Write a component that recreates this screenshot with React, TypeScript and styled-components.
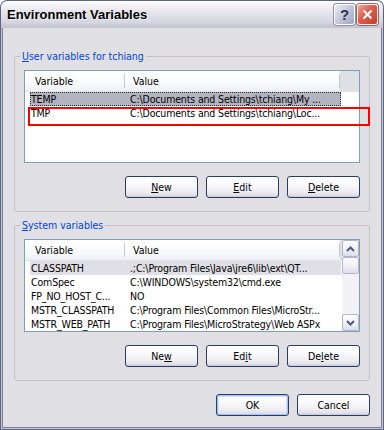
import React from "react";
import styled, { createGlobalStyle, css } from "styled-components";

const GlobalStyle = createGlobalStyle`
  html, body { margin: 0; padding: 0; background: #ffffff; }
  body { width: 384px; height: 430px; overflow: hidden; }
  * { box-sizing: border-box; }
`;

const uiFont = css`
  font-family: "DejaVu Sans Condensed", "DejaVu Sans", sans-serif;
  font-stretch: condensed;
  font-size: 10.5px;
`;

const Window = styled.div`
  width: 384px;
  height: 430px;
  display: flex;
  flex-direction: column;
`;

const TitleBar = styled.div`
  height: 28px;
  flex: none;
  display: flex;
  align-items: center;
  padding: 0 5px 1px 6px;
  border: 1px solid #5d6484;
  border-bottom: none;
  border-radius: 7px 7px 0 0;
  background: linear-gradient(
    180deg,
    #ffffff 0%,
    #f2f2f6 15%,
    #e3e3ea 45%,
    #d5d5df 80%,
    #c1c1ce 100%
  );
`;

const Title = styled.div`
  flex: 1;
  font-family: "Liberation Sans", Arial, sans-serif;
  font-weight: bold;
  font-size: 13px;
  color: #000000;
  text-shadow: 1px 1px 0 rgba(255, 255, 255, 0.6);
`;

const CapButton = styled.div<{ $kind: "help" | "close" }>`
  width: 21px;
  height: 21px;
  margin-left: 2px;
  border: 1px solid #ffffff;
  border-radius: 3px;
  display: flex;
  align-items: center;
  justify-content: center;
  font-family: "Liberation Sans", Arial, sans-serif;
  font-weight: bold;
  font-size: 15px;
  ${(p) =>
    p.$kind === "close"
      ? css`
          background: linear-gradient(135deg, #f3a597 0%, #e2604d 40%, #c63a2b 100%);
          box-shadow: 0 0 0 1px #b35a5a;
        `
      : css`
          background: linear-gradient(135deg, #eceef6 0%, #c4c7da 50%, #a0a4bf 100%);
          box-shadow: 0 0 0 1px #8a8ea8;
          color: #2e3450;
        `}
`;

const Frame = styled.div`
  flex: 1;
  display: flex;
  flex-direction: column;
  border: 1px solid #5d6484;
  border-top: none;
  padding: 0 1px 1px 1px;
  background: #c6c6d3;
`;

const Body = styled.div`
  flex: 1;
  position: relative;
  display: flex;
  flex-direction: column;
  border: 1px solid #7c819e;
  border-top: none;
  background: #e0dfe3;
  padding: 22px 11px 0 11px;
`;

const Group = styled.fieldset`
  margin: 0;
  padding: 7px 9px 13px 9px;
  border: 1px solid #c5bec7;
  border-radius: 3px;
  display: flex;
  flex-direction: column;
  min-width: 0;
  & + & {
    margin-top: 7px;
  }
`;

const Legend = styled.legend`
  ${uiFont};
  color: #0046d5;
  line-height: 13px;
  padding: 0 2px;
  margin-left: -4px;
`;

const Key = styled.span`
  text-decoration: underline;
`;

const List = styled.div`
  height: 93px;
  border: 1px solid #7f9db9;
  background: #ffffff;
  display: flex;
  overflow: hidden;
`;

const ListMain = styled.div`
  flex: 1;
  min-width: 0;
  display: flex;
  flex-direction: column;
`;

const Header = styled.div`
  height: 21px;
  flex: none;
  display: flex;
  align-items: center;
  background: linear-gradient(180deg, #ffffff 0%, #f7f8fb 70%, #eceef3 100%);
  border-bottom: 1px solid #e3e3ea;
  ${uiFont};
  color: #000000;
`;

const HeadCell = styled.div<{ $w: number; $pad: number }>`
  width: ${(p) => p.$w}px;
  padding-left: ${(p) => p.$pad}px;
  flex: none;
  white-space: nowrap;
`;

const HeadDivider = styled.div`
  width: 1px;
  height: 14px;
  flex: none;
  background: #c8c7d2;
`;

const HeadFiller = styled.div`
  flex: 1;
  align-self: stretch;
  background: #dde0e5;
`;

const Rows = styled.div`
  flex: 1;
  padding-left: 5px;
`;

const Row = styled.div<{ $sel?: "focus" | "inactive" }>`
  width: 311px;
  height: 14px;
  display: flex;
  padding-left: 1px;
  line-height: 14px;
  ${uiFont};
  letter-spacing: -0.15px;
  color: #000000;
  white-space: nowrap;
  ${(p) =>
    p.$sel === "focus" &&
    css`
      background: #b2b4bf;
      outline: 1px dotted #303030;
      outline-offset: -1px;
    `}
  ${(p) =>
    p.$sel === "inactive" &&
    css`
      background: #e0dfe5;
    `}
`;

const NameCell = styled.div`
  width: 99px;
  flex: none;
  overflow: hidden;
`;

const ValueCell = styled.div`
  flex: 1;
  overflow: hidden;
`;

const ScrollBar = styled.div`
  width: 17px;
  flex: none;
  display: flex;
  flex-direction: column;
  background: #f2f2f6;
`;

const ScrollPart = styled.div`
  width: 17px;
  height: 17px;
  flex: none;
  border: 1px solid #b3b6ca;
  border-radius: 2px;
  background: linear-gradient(180deg, #fdfdff 0%, #eeeef4 60%, #dcdde8 100%);
  display: flex;
  align-items: center;
  justify-content: center;
`;

const ScrollTrack = styled.div`
  flex: 1;
`;

const ButtonRow = styled.div<{ $top: number }>`
  display: flex;
  justify-content: flex-end;
  gap: 8px;
  margin-top: ${(p) => p.$top}px;
`;

const Button = styled.button<{ $default?: boolean }>`
  width: 73px;
  height: 22px;
  padding: 0;
  ${uiFont};
  color: #000000;
  border: 1px solid #2a3c68;
  border-radius: 3px;
  background: linear-gradient(180deg, #ffffff 0%, #f8f8fa 45%, #ececf1 75%, #d8d7e2 100%);
  box-shadow: ${(p) =>
    p.$default
      ? "inset 0 0 0 1px #a9c0ec, inset 0 0 0 2px #d3e0f8"
      : "inset 0 -1px 0 #cbcad6"};
`;

const Annotation = styled.div`
  position: absolute;
  left: 25px;
  top: 79px;
  width: 342px;
  height: 19px;
  border: 2px solid #ff0000;
  pointer-events: none;
`;

const Chevron = ({ up }: { up?: boolean }) => (
  <svg width="9" height="6" viewBox="0 0 9 6">
    <polyline
      points={up ? "1,5 4.5,1.5 8,5" : "1,1 4.5,4.5 8,1"}
      fill="none"
      stroke="#4d5a80"
      strokeWidth="2"
    />
  </svg>
);

type Item = { name: string; value: string; sel?: "focus" | "inactive" };

const userVars: Item[] = [
  { name: "TEMP", value: "C:\\Documents and Settings\\tchiang\\My ...", sel: "focus" },
  { name: "TMP", value: "C:\\Documents and Settings\\tchiang\\Loc..." },
];

const systemVars: Item[] = [
  { name: "CLASSPATH", value: ".;C:\\Program Files\\Java\\jre6\\lib\\ext\\QT...", sel: "inactive" },
  { name: "ComSpec", value: "C:\\WINDOWS\\system32\\cmd.exe" },
  { name: "FP_NO_HOST_C...", value: "NO" },
  { name: "MSTR_CLASSPATH", value: "C:\\Program Files\\Common Files\\MicroStr..." },
  { name: "MSTR_WEB_PATH", value: "C:\\Program Files\\MicroStrategy\\Web ASPx" },
];

const VarList = ({ items, scroll }: { items: Item[]; scroll?: boolean }) => (
  <List>
    <ListMain>
      <Header>
        <HeadCell $w={99} $pad={10}>Variable</HeadCell>
        <HeadDivider />
        <HeadCell $w={214} $pad={8}>Value</HeadCell>
        <HeadDivider />
        <HeadFiller />
      </Header>
      <Rows>
        {items.map((it) => (
          <Row key={it.name} $sel={it.sel}>
            <NameCell>{it.name}</NameCell>
            <ValueCell>{it.value}</ValueCell>
          </Row>
        ))}
      </Rows>
    </ListMain>
    {scroll && (
      <ScrollBar>
        <ScrollPart>
          <Chevron up />
        </ScrollPart>
        <ScrollPart />
        <ScrollTrack />
        <ScrollPart>
          <Chevron />
        </ScrollPart>
      </ScrollBar>
    )}
  </List>
);

export default function App() {
  return (
    <>
      <GlobalStyle />
      <Window>
        <TitleBar>
          <Title>Environment Variables</Title>
          <CapButton $kind="help">?</CapButton>
          <CapButton $kind="close">
            <svg width="11" height="11" viewBox="0 0 11 11">
              <path d="M1.5 1.5 L9.5 9.5 M9.5 1.5 L1.5 9.5" stroke="#ffffff" strokeWidth="2.2" />
            </svg>
          </CapButton>
        </TitleBar>
        <Frame>
          <Body>
            <Group>
              <Legend>
                <Key>U</Key>ser variables for tchiang
              </Legend>
              <VarList items={userVars} />
              <ButtonRow $top={13}>
                <Button><Key>N</Key>ew</Button>
                <Button><Key>E</Key>dit</Button>
                <Button><Key>D</Key>elete</Button>
              </ButtonRow>
            </Group>
            <Group>
              <Legend>
                <Key>S</Key>ystem variables
              </Legend>
              <VarList items={systemVars} scroll />
              <ButtonRow $top={13}>
                <Button>Ne<Key>w</Key></Button>
                <Button>Ed<Key>i</Key>t</Button>
                <Button>De<Key>l</Key>ete</Button>
              </ButtonRow>
            </Group>
            <ButtonRow $top={13}>
              <Button $default>OK</Button>
              <Button>Cancel</Button>
            </ButtonRow>
            <Annotation />
          </Body>
        </Frame>
      </Window>
    </>
  );
}
